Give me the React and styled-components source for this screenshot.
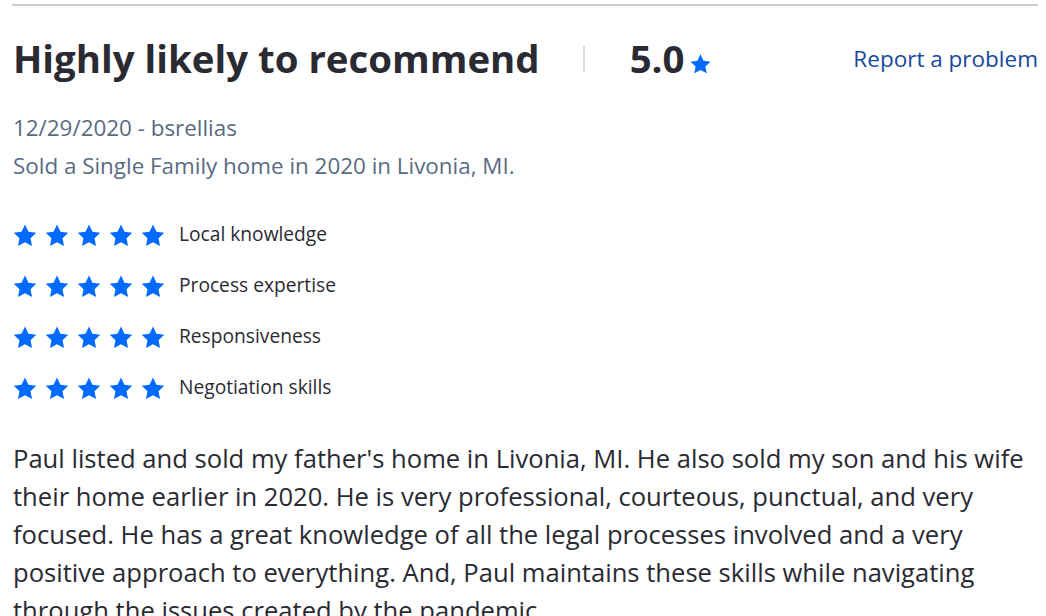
import React from "react";
import styled, { createGlobalStyle } from "styled-components";

const GlobalStyle = createGlobalStyle`
  body {
    margin: 0;
    background: #fff;
    font-family: "Open Sans", "Noto Sans", sans-serif;
    color: #2a2a33;
  }
`;

const ratings = [
  "Local knowledge",
  "Process expertise",
  "Responsiveness",
  "Negotiation skills",
];

const Star = ({ size = 26 }) => (
  <svg width={size} height={size} viewBox="0 0 24 24" aria-hidden="true">
    <path
      fill="#006aff"
      d="M12 1.4l3.2 6.6 7.2 1-5.3 5 1.4 7.2L12 17.8l-6.5 3.4 1.4-7.2-5.3-5 7.2-1z"
    />
  </svg>
);

const App = () => {
  return (
    <>
      <GlobalStyle />
      <Review>
        <Header>
          <Title>Highly likely to recommend</Title>
          <Divider />
          <Score>
            5.0
            <Star size={23} />
          </Score>
          <ReportLink href="#">Report a problem</ReportLink>
        </Header>
        <Meta>12/29/2020 - bsrellias</Meta>
        <Meta>Sold a Single Family home in 2020 in Livonia, MI.</Meta>
        <Ratings>
          {ratings.map((label) => (
            <RatingRow key={label}>
              <Stars>
                {[0, 1, 2, 3, 4].map((i) => (
                  <Star key={i} />
                ))}
              </Stars>
              <RatingLabel>{label}</RatingLabel>
            </RatingRow>
          ))}
        </Ratings>
        <Body>
          Paul listed and sold my father's home in Livonia, MI. He also sold my
          son and his wife their home earlier in 2020. He is very professional,
          courteous, punctual, and very focused. He has a great knowledge of all
          the legal processes involved and a very positive approach to
          everything. And, Paul maintains these skills while navigating through
          the issues created by the pandemic.
        </Body>
      </Review>
    </>
  );
};

export default App;

const Review = styled.div`
  margin: 4px 8px 0 12px;
  border-top: 2px solid #cdcdd1;
  padding-top: 28px;
`;

const Header = styled.div`
  display: flex;
  align-items: center;
  height: 48px;
  margin-bottom: 27px;
`;

const Title = styled.h2`
  margin: 0 0 0 1px;
  font-size: 38.4px;
  font-weight: 700;
  line-height: 48px;
  color: #2a2a33;
`;

const Divider = styled.span`
  width: 2px;
  height: 26px;
  background: #dcdce0;
  margin: 2px 45px 0 43px;
`;

const Score = styled.div`
  display: flex;
  align-items: center;
  gap: 5px;
  font-size: 38.4px;
  font-weight: 700;
  line-height: 48px;
  svg {
    margin-top: 12px;
  }
`;

const ReportLink = styled.a`
  margin-left: auto;
  font-size: 22.5px;
  color: #16489c;
  text-decoration: none;
`;

const Meta = styled.div`
  margin-left: 1px;
  font-size: 22.4px;
  line-height: 38px;
  color: #596b82;
`;

const Ratings = styled.div`
  display: flex;
  flex-direction: column;
  gap: 27px;
  margin-top: 39px;
`;

const RatingRow = styled.div`
  display: flex;
  align-items: center;
  gap: 13px;
  height: 24px;
`;

const Stars = styled.div`
  display: flex;
  gap: 6px;
`;

const RatingLabel = styled.span`
  font-size: 19.2px;
  line-height: 24px;
  margin-bottom: 5px;
  color: #2a2a33;
`;

const Body = styled.p`
  margin: 39px 0 0 1px;
  font-size: 25.6px;
  line-height: 38px;
  color: #2a2a33;
`;
